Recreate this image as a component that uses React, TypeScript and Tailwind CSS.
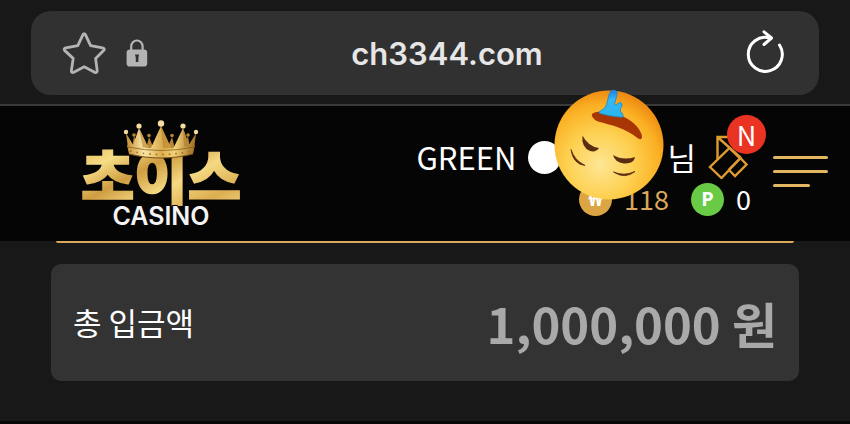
import type { ReactNode } from "react";

const KR = "font-['Noto_Sans_CJK_KR',sans-serif]";

function StarIcon() {
  return (
    <svg viewBox="0 0 44 44" className="h-11 w-11" fill="none" aria-hidden>
      <path
        d="M23.4 3.600L28.600 14.600L40.600 16.800Q43.400 17.600 41.600 19.600L33.600 27.400L35.200 39.600Q35 42.400 32.600 41.200L22.200 35.700L11.800 41.200Q9.200 42.200 9.400 39.600L11.200 27.400L2.800 19.600Q1.200 17.600 3.800 16.800L15.800 14.600L21 3.600Q22.200 1.800 23.400 3.600Z"
        stroke="#b4b4b4"
        strokeWidth="2.8"
        strokeLinejoin="round"
      />
    </svg>
  );
}

function LockIcon() {
  return (
    <svg viewBox="0 0 22 28" className="h-7 w-[22px]" fill="none" aria-hidden>
      <path d="M5.2 13V7.600a5.700 6.100 0 0 1 11.400 0V13" stroke="#b4b4b4" strokeWidth="2.2" />
      <rect x="0.600" y="10.600" width="20.600" height="17" rx="3.4" fill="#b4b4b4" />
      <path d="M9 15.600h4l-.6 3.400v4h-2.600v-4z" fill="#313131" />
    </svg>
  );
}

function ReloadIcon() {
  return (
    <svg viewBox="0 0 40 46" className="h-[46px] w-10" fill="none" aria-hidden>
      <path
        d="M33.500 15A17 17 0 1 1 24 8M18 1.800L25.500 8L18 14.500"
        stroke="#fff"
        strokeWidth="3"
        strokeLinecap="round"
        strokeLinejoin="round"
      />
    </svg>
  );
}

function AddressBar() {
  return (
    <div className="border-b-2 border-[#3a3a3a] bg-[#181818] px-[31px] pt-[11px] pb-[9px]">
      <form className="flex h-[84px] items-center rounded-[20px] bg-[#313131] pr-[33px] pl-[31px]">
        <button type="button" aria-label="Bookmark">
          <StarIcon />
        </button>
        <span className="ml-5">
          <LockIcon />
        </span>
        <input
          type="text"
          aria-label="Address"
          defaultValue="ch3344.com"
          className="min-w-0 flex-1 bg-transparent pt-0.5 text-center font-[Inter,sans-serif] text-[31px] font-semibold text-[#e6e6e6] outline-none"
        />
        <button type="button" aria-label="Reload">
          <ReloadIcon />
        </button>
      </form>
    </div>
  );
}

function Logo() {
  return (
    <a href="#" className="block">
      <svg viewBox="0 0 170 118" className="h-[118px] w-[170px]" role="img" aria-label="초이스 CASINO">
        <defs>
          <linearGradient id="gold" x1="0" y1="0" x2="1" y2="1">
            <stop offset="0" stopColor="#dcaa48" />
            <stop offset="0.25" stopColor="#f6dd86" />
            <stop offset="0.42" stopColor="#cf9d41" />
            <stop offset="0.6" stopColor="#f5d983" />
            <stop offset="0.8" stopColor="#dcae50" />
            <stop offset="1" stopColor="#f5dc8c" />
          </linearGradient>
          <linearGradient id="crown" x1="0" y1="0" x2="1" y2="0">
            <stop offset="0" stopColor="#c18a32" />
            <stop offset="0.25" stopColor="#fbe9a8" />
            <stop offset="0.5" stopColor="#dcae50" />
            <stop offset="0.7" stopColor="#f3d278" />
            <stop offset="1" stopColor="#9a6a20" />
          </linearGradient>
        </defs>
        <text
          x="85"
          y="82"
          textAnchor="middle"
          fill="url(#gold)"
          stroke="url(#gold)"
          strokeWidth="1.600"
          className="font-['Noto_Sans_CJK_KR',sans-serif] text-[58px] font-black"
        >
          초이스
        </text>
        <g fill="#b98731">
          <path d="M56 32L58 19L63 32ZM70 32L73 20L78 32ZM91 32L96 20L99 32ZM107 32L112 19L114 32Z" />
          <circle cx="58" cy="18" r="1.800" />
          <circle cx="73" cy="18.500" r="1.800" />
          <circle cx="96" cy="18.500" r="1.800" />
          <circle cx="112" cy="18" r="1.800" />
        </g>
        <path
          d="M52 31L50 16L59 31ZM56 31L63 11L73 32ZM74 33L85 9L96 33ZM97 32L107 11L114 31ZM111 31L120 16L118 31Z"
          fill="url(#crown)"
        />
        <path d="M85 9L96 33L87 33ZM107 11L114 31L108 32ZM63 11L73 32L67 32ZM120 16L118 31L115 31Z" fill="#b27b28" opacity="0.6" />
        <path d="M51 28Q85 35 119 28L117 37Q85 45 53 37Z" fill="url(#crown)" />
        <path d="M52 30Q85 37 118 30" fill="none" stroke="#8d5f1c" strokeWidth="0.8" />
        <path d="M53 37Q85 45 117 37" fill="none" stroke="#7c5016" strokeWidth="1.2" />
        <path d="M54 34Q85 41 116 34" fill="none" stroke="#9c6c22" strokeWidth="1.600" strokeDasharray="1.500 5" />
        <g fill="#f5dca0">
          <circle cx="50" cy="15" r="2.2" />
          <circle cx="63" cy="9" r="2.600" />
          <circle cx="85" cy="6.500" r="3.2" />
          <circle cx="107" cy="9" r="2.600" />
          <circle cx="120" cy="15" r="2.2" />
        </g>
        <text
          x="85"
          y="108"
          textAnchor="middle"
          fill="#f4f4f4"
          stroke="#050505"
          strokeWidth="2"
          paintOrder="stroke"
          className="font-[Inter,sans-serif] text-[25px] font-semibold"
        >
          CASINO
        </text>
      </svg>
    </a>
  );
}

function FaceSticker() {
  return (
    <svg viewBox="0 0 110 112" className="absolute -top-[52px] left-[26px] h-28 w-[110px]" aria-hidden>
      <defs>
        <radialGradient id="face" cx="0.42" cy="0.68" r="0.68">
          <stop offset="0" stopColor="#fee694" />
          <stop offset="0.45" stopColor="#fdd050" />
          <stop offset="0.8" stopColor="#fbb023" />
          <stop offset="1" stopColor="#ee8b12" />
        </radialGradient>
        <linearGradient id="drool" x1="0" y1="0" x2="0" y2="1">
          <stop offset="0" stopColor="#1f7fe0" />
          <stop offset="0.35" stopColor="#35b8f5" />
          <stop offset="1" stopColor="#2bb4ee" />
        </linearGradient>
      </defs>
      <circle cx="55" cy="56" r="54.500" fill="url(#face)" />
      <path
        d="M38.500 28C36 24 41 22.500 48 22.700C64 23 82 31 87.500 45C89 50 87 51.500 83.500 49C71 39 57 36 44 32.500Q40 31 38.500 28Z"
        fill="#a83604"
      />
      <path
        d="M56.500 2.500Q58 .5 61.500 1.500Q64 2.500 63 6L60.500 15Q62 17 64 14.500Q67 12 68 15Q68.500 17 66.500 19.500Q65.500 22 68.500 25Q71 29 65 28Q55 27 46 24.500Q43.500 23 48 21Q52 19 53 14Q54.500 6 56.500 2.500Z"
        fill="url(#drool)"
        stroke="#1a86c8"
        strokeWidth="0.8"
      />
      <g fill="#5a2c10">
        <path d="M28.500 46.500Q34 57.500 45 59Q42 63.500 36 62Q27 58 28.500 46.500Z" />
        <path d="M59 66Q69 72 81 68Q80 75 70 74.500Q61 73.500 59 66Z" />
        <path d="M17 60.500Q20 71 31 76.500Q19 75 17 60.500Z" stroke="#5a2c10" strokeWidth="0.8" />
        <path d="M59.500 83Q70 87.500 81 82.500Q71 90.500 59.500 83Z" stroke="#5a2c10" strokeWidth="0.8" />
      </g>
    </svg>
  );
}

function CouponIcon() {
  return (
    <svg viewBox="0 0 40 44" className="h-11 w-10" fill="none" stroke="#dd9b31" strokeWidth="2.4" aria-hidden>
      <path d="M9.500 24V2H22M9.500 2L33 23" />
      <path d="M21.500 13L32 23.500L13.500 43L2 32Z" />
      <path d="M30 20.500L38.500 29.500L27 41L20.500 34.500M32 23.500L21 34.500" />
    </svg>
  );
}

function Coin({ className, children }: { className: string; children: ReactNode }) {
  return (
    <span
      className={`flex h-[33px] w-[33px] items-center justify-center rounded-full font-['Noto_Sans',sans-serif] text-xl font-bold text-white ${className}`}
    >
      {children}
    </span>
  );
}

function SiteHeader() {
  return (
    <header className="relative z-10 flex h-[135px] items-start justify-between bg-[#050505] pr-[22px] pl-[76px]">
      <div className="pt-[11px]">
        <Logo />
      </div>
      <div className="flex items-start gap-[22px] pt-[29px] text-[31px] text-white">
        <div className="flex flex-col items-end">
          <div className="flex h-11 items-center">
            <span>GREEN</span>
            <span className="relative ml-3 h-[33px] w-[139px]">
              <span className="block h-[33px] w-[33px] rounded-full bg-white" />
              <FaceSticker />
            </span>
            <span>님</span>
            <button type="button" aria-label="쿠폰" className="relative mr-[3px] ml-3">
              <CouponIcon />
              <span className="absolute -top-5 left-[19px] flex h-[39px] w-[39px] items-center justify-center rounded-full bg-[#ea3323] text-[27px] leading-none text-white">
                N
              </span>
            </button>
          </div>
          <div className="flex h-10 items-center text-[27px]">
            <Coin className="bg-[#dba544]">₩</Coin>
            <span className="ml-3 text-[#dba75c]">118</span>
            <Coin className="ml-[22px] bg-[#68ca45]">P</Coin>
            <span className="ml-3">0</span>
          </div>
        </div>
        <button type="button" aria-label="메뉴" className="mt-[21px] flex w-[55px] flex-col gap-[11px]">
          <span className="h-[3px] w-full rounded-full bg-[#e3b662]" />
          <span className="h-[3px] w-full rounded-full bg-[#e3b662]" />
          <span className="h-[3px] w-2/3 rounded-full bg-[#e3b662]" />
        </button>
      </div>
    </header>
  );
}

function DepositTotal() {
  return (
    <main className="px-[51px] pb-10">
      <div className="mx-[5px] h-0.5 rounded-b-full bg-[#dba95c]" />
      <dl className="mt-[21px] flex h-[117px] items-center justify-between rounded-[10px] bg-[#333333] px-[22px]">
        <dt className="text-[31px] text-white">총 입금액</dt>
        <dd className="text-[49px] font-bold text-[#a9a9a9]">1,000,000 원</dd>
      </dl>
    </main>
  );
}

export default function App() {
  return (
    <div className={`min-h-screen border-b-[3px] border-[#080808] bg-[#181818] ${KR}`}>
      <AddressBar />
      <SiteHeader />
      <DepositTotal />
    </div>
  );
}
